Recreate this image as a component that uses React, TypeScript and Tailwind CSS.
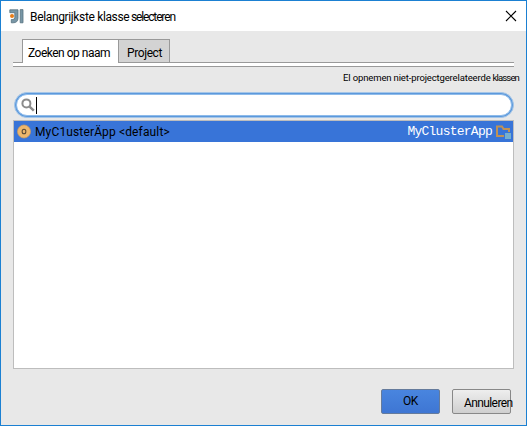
import React from 'react';

function Logo() {
  return (
    <svg width="15" height="15" viewBox="0 0 15 15" className="shrink-0">
      <path d="M.8.8H9V9q0 4.8-5 4.8H2.3v-3.3h1.5q2 0 2-2V3.7H.8z" fill="#7896a6" stroke="#56717f" strokeWidth=".8" />
      <path d="M11.2.6H14v13.2h-2.8z" fill="#7896a6" stroke="#56717f" strokeWidth=".8" />
      <circle cx="3" cy="7" r="2" fill="#e87d18" />
    </svg>
  );
}

export default function App() {
  return (
    <div className="flex h-[426px] w-[527px] flex-col overflow-hidden border border-[#1b80d2] bg-[#e8e8e8] font-[Roboto,sans-serif] text-[12px] leading-4 text-black">
      <header className="flex h-[30px] shrink-0 items-center bg-white pl-2 pr-[9px]">
        <Logo />
        <h1 className="ml-[6px] mt-0.5 flex whitespace-nowrap font-normal">
          <span className="w-[101px] tracking-[-0.35px]">Belangrijkste klasse </span>
          <span className="tracking-[-1.15px]">selecteren</span>
        </h1>
        <svg width="12" height="12" viewBox="0 0 12 12" className="ml-auto" fill="none" stroke="#000" strokeWidth="1.1">
          <path d="M1 1l10 10M11 1L1 11" />
        </svg>
      </header>

      <div className="ml-3 mr-[12px] mt-2 h-[28px] shrink-0">
        <div className="flex h-6 items-end">
          <div className="h-px w-[9px] bg-[#999]" />
          <div className="h-6 w-[96px] whitespace-nowrap border-l border-t border-[#999] bg-white pl-[5px] pt-[5px] tracking-[-0.5px]">Zoeken op naam</div>
          <div className="h-6 w-[52px] border border-[#999] bg-[#d3d3d3] pl-2 pt-[5px] tracking-[-0.4px]">Project</div>
          <div className="h-px flex-1 bg-[#999]" />
        </div>
        <div className="h-1 border-b border-[#999] bg-white" />
      </div>

      <div className="mr-[7px] mt-[3px] flex h-4 shrink-0 justify-end whitespace-nowrap text-[9.5px]">
        <span className="tracking-[-0.14px]">El opnemen niet-projectgerelateerde</span>
        <span className="ml-[2px] tracking-[-0.85px]">klassen</span>
      </div>

      <div className="ml-[13px] mt-[6px] flex h-[26px] w-[500px] shrink-0 items-center rounded-full border border-[#a5c6e8] bg-[#5c99dc] p-px">
        <div className="flex h-full w-full items-center rounded-full border border-[#8ebbea] bg-white pl-1">
          <svg width="14" height="14" viewBox="0 0 14 14" fill="none" stroke="#8c8c8c" strokeWidth="2">
            <circle cx="5.4" cy="5.4" r="4" />
            <path d="M8.3 8.3l4.5 4.3" strokeWidth="2.5" />
          </svg>
          <div className="ml-px h-[17px] w-px bg-black" />
        </div>
      </div>

      <main className="ml-3 mt-[2px] h-[249px] w-[501px] shrink-0 border border-[#bdbdbd] bg-white">
        <div className="flex h-[21px] items-center bg-[#3874d8] pl-[3px] pr-[2px]">
          <svg width="14" height="15" viewBox="0 0 15 15">
            <circle cx="7.5" cy="7.5" r="7" fill="#edb76c" stroke="#d49b56" strokeWidth=".7" />
            <ellipse cx="7.5" cy="7.5" rx="2" ry="2.5" fill="none" stroke="#594934" strokeWidth="1.1" />
          </svg>
          <span className="ml-1 whitespace-nowrap tracking-[0.14px]">MyC1usterÄpp &lt;default&gt;</span>
          <span className="ml-auto mr-[4px] font-['Liberation_Mono',monospace] text-[13px] tracking-[-0.75px] text-white">MyClusterApp</span>
          <svg width="15" height="14" viewBox="0 0 15 14">
            <path d="M1 11V1.5h5L7.5 4H13v7z" fill="none" stroke="#bf9256" strokeWidth="2" />
            <path d="M8 7h7v7H8z" fill="#3874d8" />
            <path d="M9 8h6v6H9z" fill="#74afd0" />
          </svg>
        </div>
      </main>

      <footer className="mr-[15px] mt-5 flex h-[25px] shrink-0 justify-end gap-3">
        <button className="w-[59px] rounded-[2px] border border-[#657b9c] bg-linear-to-b from-[#4985df] to-[#3e76d3] pb-[1px] tracking-[-0.4px]">OK</button>
        <button className="w-[59px] whitespace-nowrap rounded-[2px] border border-[#888] bg-linear-to-b from-[#eee] to-[#cfcfcf] pl-[11px] pt-[2px] text-left tracking-[-0.6px]">Annuleren</button>
      </footer>
    </div>
  );
}
